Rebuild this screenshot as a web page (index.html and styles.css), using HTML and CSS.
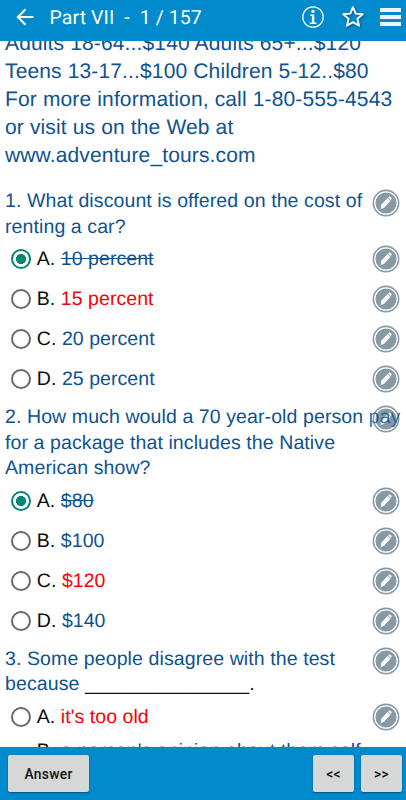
FILE: index.html
```html
<!DOCTYPE html>
<html lang="en">
<head>
<meta charset="utf-8">
<title>Part VII</title>
<link rel="stylesheet" href="styles.css">
</head>
<body>
<svg class="defs" width="0" height="0" aria-hidden="true">
  <symbol id="edit" viewBox="0 0 28 28">
    <circle cx="14" cy="14" r="13.4" fill="#8799a3"/>
    <circle cx="14" cy="14" r="11.2" fill="none" stroke="#fff" stroke-width="1.3"/>
    <path d="M8.600 20.200l.5-4.100 6.500-7 2.900 2.700-6.400 7zM16.200 8.500l.8-.8q.6-.5 1.200 0l1.200 1.100q.5.600 0 1.200l-.7.9z" fill="#fff"/>
  </symbol>
</svg>
<header class="bar">
  <svg class="back" width="18" height="18" viewBox="0 0 18 18"><path d="M17.500 9H2M9.500 1.300L1.800 9 9.500 16.700" fill="none" stroke="#fff" stroke-width="2"/></svg>
  <h1 class="title">Part VII&nbsp; -&nbsp; 1 / 157</h1>
  <svg class="info" width="22" height="22" viewBox="0 0 22 22"><circle cx="11" cy="11" r="10.2" fill="none" stroke="#fff" stroke-width="1.2"/><circle cx="11" cy="5.4" r="1.7" fill="#fff"/><path d="M8 8.400h4.300v8h2.200v1.500H7.700v-1.500h2.200V9.900H8z" fill="#fff"/></svg>
  <svg class="star" width="22" height="22" viewBox="0 0 22 22"><path d="M11 1.200l2.700 6.400 7 .6-5.300 4.600 1.600 7-6-3.700-6 3.700 1.600-7L1.300 8.200l7-.6z" fill="none" stroke="#fff" stroke-width="1.900" stroke-linejoin="round"/></svg>
  <div class="menu"><i></i><i></i><i></i></div>
</header>
<main class="content">
  <div class="scroll">
    <p class="passage">Adults 18-64...$140 Adults 65+...$120<br>Teens 13-17...$100 Children 5-12..$80<br>For more information, call 1-80-555-4543<br>or visit us on the Web at<br>www.adventure_tours.com</p>
    <section class="item">
      <div class="question"><p>1. What discount is offered on the cost of<br>renting a car?</p><svg class="edit"><use href="#edit"/></svg></div>
      <div class="option"><span class="radio on"></span><span class="label">A. <s>10 percent</s></span><svg class="edit"><use href="#edit"/></svg></div>
      <div class="option"><span class="radio"></span><span class="label">B. <b>15 percent</b></span><svg class="edit"><use href="#edit"/></svg></div>
      <div class="option"><span class="radio"></span><span class="label">C. <span>20 percent</span></span><svg class="edit"><use href="#edit"/></svg></div>
      <div class="option"><span class="radio"></span><span class="label">D. <span>25 percent</span></span><svg class="edit"><use href="#edit"/></svg></div>
    </section>
    <section class="item">
      <div class="question"><p>2. How much would a 70 year-old person <span class="under">pay</span><br>for a package that includes the Native<br>American show?</p><svg class="edit"><use href="#edit"/></svg></div>
      <div class="option"><span class="radio on"></span><span class="label">A. <s>$80</s></span><svg class="edit"><use href="#edit"/></svg></div>
      <div class="option"><span class="radio"></span><span class="label">B. <span>$100</span></span><svg class="edit"><use href="#edit"/></svg></div>
      <div class="option"><span class="radio"></span><span class="label">C. <b>$120</b></span><svg class="edit"><use href="#edit"/></svg></div>
      <div class="option"><span class="radio"></span><span class="label">D. <span>$140</span></span><svg class="edit"><use href="#edit"/></svg></div>
    </section>
    <section class="item">
      <div class="question"><p>3. Some people disagree with the test<br>because <span class="blank">_______________.</span></p><svg class="edit"><use href="#edit"/></svg></div>
      <div class="option"><span class="radio"></span><span class="label">A. <b>it's too old</b></span><svg class="edit"><use href="#edit"/></svg></div>
      <div class="option tall"><span class="radio"></span><span class="label">B. <span>a person's opinion about them self</span></span></div>
    </section>
  </div>
</main>
<footer class="footer">
  <button class="answer">Answer</button>
  <button class="nav">&lt;&lt;</button>
  <button class="nav">&gt;&gt;</button>
</footer>
</body>
</html>
```
FILE: styles.css
```css
* { box-sizing: border-box; }
html, body { height: 100%; margin: 0; }
body {
  display: flex;
  flex-direction: column;
  overflow: hidden;
  background: #fff;
  font-family: "Liberation Sans", Arial, sans-serif;
  text-rendering: geometricPrecision;
  color: #0f5290;
}
p { margin: 0; }
.defs { position: absolute; }

.bar {
  flex: none;
  height: 41px;
  display: flex;
  align-items: center;
  padding: 0 5px 7px 16px;
  background: #028bcc;
}
.title {
  margin: 2px 0 0 15.500px;
  font: 400 19.500px/24px Roboto, sans-serif;
  letter-spacing: 0.1px;
  color: #fff;
  white-space: nowrap;
}
.info { margin-left: auto; }
.star { margin-left: 18px; filter: drop-shadow(1px 1px 1px rgba(0, 50, 90, .6)); }
.menu { display: flex; flex-direction: column; gap: 3px; margin: -1px 0 0 16px; }
.menu i { width: 21px; height: 4px; background: #f1f4f6; }

.content { flex: 1; min-height: 0; overflow: hidden; }
.scroll { margin-top: -11px; padding: 0 6.500px 0 5px; white-space: nowrap; }
.passage { font-size: 21px; line-height: 28px; letter-spacing: 0.14px; margin-bottom: 18px; }
.item { margin-bottom: 5px; font-size: 19.500px; letter-spacing: 0.1px; }
.question {
  display: grid;
  grid-template-columns: 1fr 28px;
  padding-top: 1px;
  margin-bottom: -1px;
  line-height: 25.500px;
}
.question p { position: relative; z-index: 1; width: 0; }
.under { opacity: .8; }
.blank { color: #111; }
.option { display: flex; align-items: center; height: 40px; padding-left: 6px; }
.option.tall { height: 53px; padding-top: 2px; }
.tall .label { height: 51px; line-height: 25.500px; letter-spacing: 0.1px; }
.radio {
  flex: none;
  width: 20px;
  height: 20px;
  border: 2px solid #686868;
  border-radius: 50%;
}
.radio.on {
  border-color: #058475;
  background: radial-gradient(circle, #058475 0 4.800px, #fff 5.300px);
}
.label { margin-left: 5.800px; color: #0c0c0c; line-height: 24px; letter-spacing: 0.06px; }
.label span, .label s { color: #0f5290; }
.label b { font-weight: 400; color: #fa0006; }
.edit { display: block; width: 28px; height: 28px; margin-left: auto; }

.footer {
  flex: none;
  height: 53px;
  display: flex;
  padding: 8px 4px 0 8px;
  gap: 7px;
  background: #028bcc;
}
.footer button {
  height: 37px;
  border: 0;
  border-radius: 2px;
  padding: 0;
  background: #d6d8d8;
  box-shadow: 0 1px 2px rgba(0, 40, 70, .6);
  font: 500 13.800px Roboto, sans-serif;
  letter-spacing: 0.3px;
  color: #101010;
}
.footer .answer { width: 81px; margin-right: auto; }
.footer .nav { width: 41px; }
```
